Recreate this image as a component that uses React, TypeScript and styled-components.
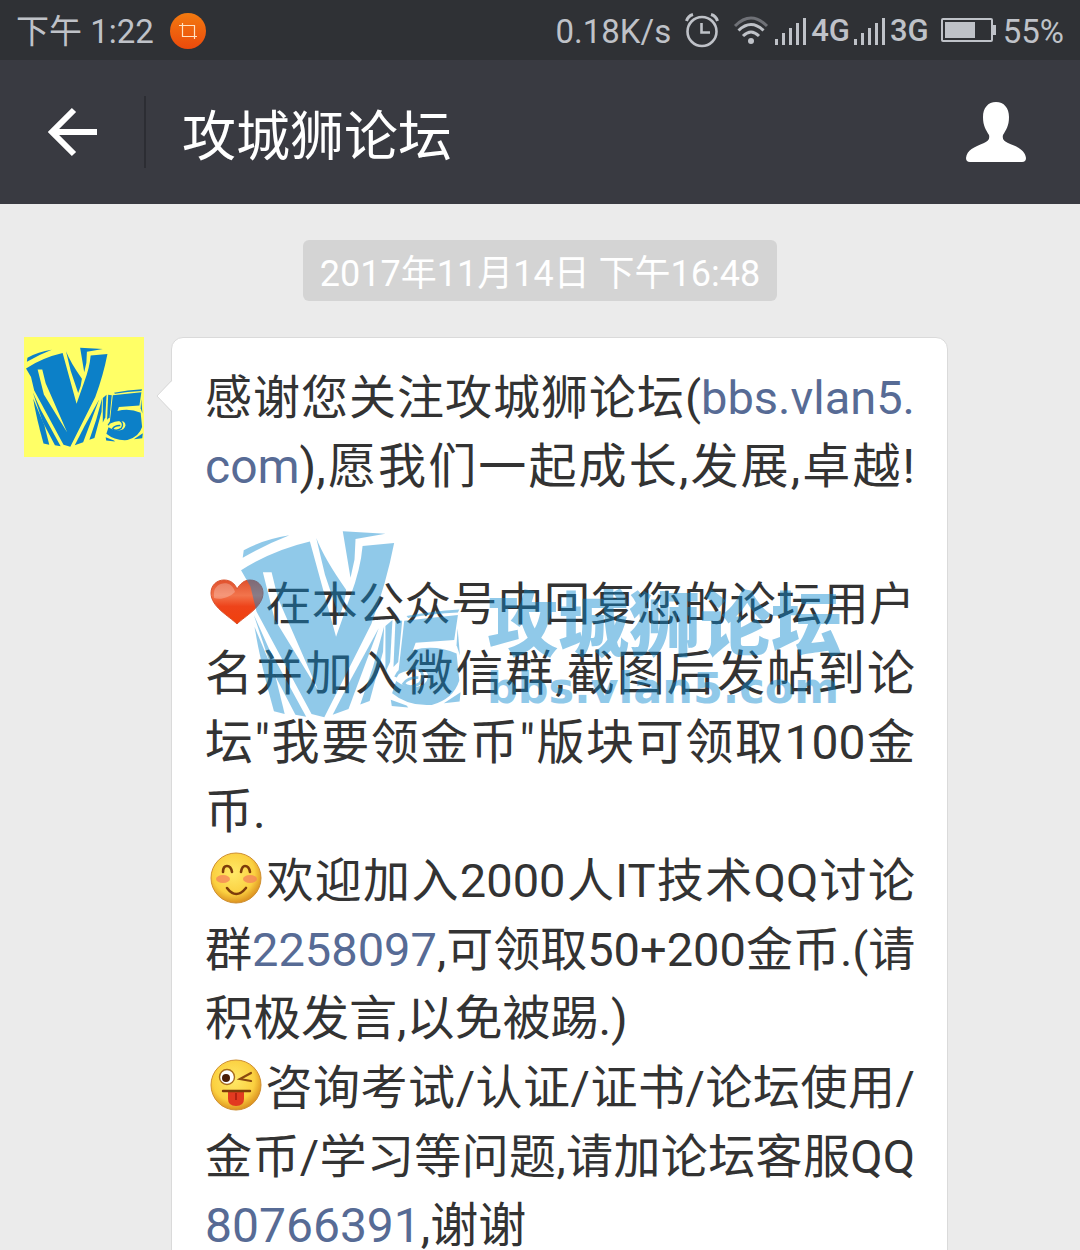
import React from 'react';
import styled, { createGlobalStyle } from 'styled-components';

const GlobalStyle = createGlobalStyle`
  *, *::before, *::after { box-sizing: border-box; }
  body {
    margin: 0;
    background: #ebebeb;
    font-family: Roboto, "Noto Sans CJK SC", sans-serif;
  }
`;

const Screen = styled.div`
  display: flex;
  flex-direction: column;
  height: 100vh;
  overflow: hidden;
`;

const StatusBar = styled.div`
  display: flex;
  flex: none;
  align-items: center;
  justify-content: space-between;
  height: 60px;
  padding: 2px 16px 0;
  background: #2f3135;
  color: #bfc2c8;
  font-size: 33px;
  line-height: 40px;
  white-space: nowrap;
`;

const StatusGroup = styled.div<{ $gap: number }>`
  display: flex;
  align-items: center;
  gap: ${(p) => p.$gap}px;
`;

const StatusText = styled.span`
  padding-top: 2px;
`;

const Network = styled.span`
  display: flex;
  align-items: center;
  gap: 4px;
  font-size: 31px;
  font-weight: 500;
`;

const Icon = styled.svg`
  display: block;
  flex: none;
`;

const Header = styled.header`
  display: flex;
  flex: none;
  align-items: center;
  height: 144px;
  padding: 0 48px 0 0;
  background: #393a41;
  color: #fff;
`;

const IconButton = styled.button<{ $width: number }>`
  display: flex;
  align-items: center;
  justify-content: center;
  width: ${(p) => p.$width}px;
  height: 72px;
  padding: 0;
  border: 0;
  background: none;
  color: inherit;
`;

const Title = styled.h1`
  flex: 1;
  margin: 0;
  padding: 12px 0 0 36px;
  border-left: 2px solid #2c2d33;
  font-size: 54px;
  font-weight: 400;
  line-height: 60px;
`;

const Chat = styled.main`
  display: flex;
  flex: 1;
  flex-direction: column;
  min-height: 0;
  padding: 36px 132px 0 24px;
`;

const Timestamp = styled.time`
  align-self: center;
  margin: 0 0 36px 108px;
  padding: 8px 17px 0;
  border-radius: 6px;
  background: #d4d4d4;
  color: #fff;
  font-size: 36px;
  line-height: 53px;
  white-space: nowrap;
`;

const Message = styled.article`
  display: flex;
  align-items: flex-start;
  gap: 27px;
`;

const Avatar = styled.div`
  display: flex;
  flex: none;
  align-items: center;
  justify-content: center;
  width: 120px;
  height: 120px;
  background: #ffff66;
  color: #0c80c8;
`;

const Bubble = styled.div`
  position: relative;
  flex: 1;
  min-width: 0;
  padding: 25px 32px 24px 33px;
  border: 1px solid #dadada;
  border-radius: 12px;
  background: #fff;
`;

const Tail = styled.svg`
  position: absolute;
  top: 41px;
  left: -16px;
`;

const Line = styled.p<{ $full?: boolean; $size?: number }>`
  min-height: 69px;
  margin: 0;
  color: #333;
  font-size: ${(p) => p.$size ?? 48}px;
  line-height: 69px;
  white-space: nowrap;
  text-align: justify;
  text-align-last: ${(p) => (p.$full ? 'justify' : 'left')};
`;

const Link = styled.a`
  color: #576b95;
  text-decoration: none;
`;

const Emoji = styled.svg`
  display: inline-block;
  width: 60px;
  height: 54px;
  vertical-align: -8px;
`;

const Watermark = styled.div`
  position: absolute;
  top: 192px;
  left: 69px;
  display: flex;
  align-items: flex-start;
  gap: 26px;
  color: #0c88cf;
  opacity: 0.45;
  pointer-events: none;
`;

const WatermarkText = styled.div`
  padding-top: 56px;
  font-weight: 900;
  font-size: 71px;
  line-height: 80px;
  white-space: nowrap;
`;

const WatermarkUrl = styled.div`
  font-family: "DejaVu Sans", sans-serif;
  font-size: 43px;
  font-weight: 700;
  line-height: 44px;
`;

function Logo({ width, height }: { width: number; height: number }) {
  return (
    <Icon width={width} height={height} viewBox="122 32 655 560" fill="currentColor" aria-hidden="true">
      <path d="M127 115L130 92Q190 60 266 48Q190 78 127 115Z" />
      <path
        fillRule="evenodd"
        d="M122 152Q215 92 327 66L405 350L448 228Q478 150 484 80L578 71Q555 190 510 312L370 590L332 580L168 275L150 200ZM187 158L213 158L232 235L352 510L222 298Z"
      />
      <path d="M346 56Q370 118 435 210Q432 250 414 290L372 165Z" />
      <path d="M425 36L552 43L463 59L460 120L448 174Z" />
      <path d="M160 285L205 385L316 588L284 582L215 450Z" />
      <path d="M162 320L225 470L252 580L220 572Q180 430 162 320Z" />
      <path d="M532 325L442 565L395 582L450 475Z" />
      <path d="M548 320L545 395L505 541L477 552L515 440Z" />
      <path d="M552 318L573 300L566 425L552 455Z" />
      <path d="M582 300L602 302L590 425L576 440Z" />
      <path d="M615 288Q690 274 772 269L768 278Q690 282 620 294Z" />
      <path d="M608 302L768 285L757 360L642 368L634 390Q700 372 764 400L772 480Q755 535 690 553Q620 558 572 518L584 482Q625 512 666 492Q690 470 670 450Q635 440 590 462Z" />
      <path d="M568 538L615 555L620 561L571 556Z" />
      <path d="M726 548L776 515L773 543Z" />
      <path d="M767 325L774 405L764 375Z" />
      <path d="M582 470Q600 432 640 440Q676 456 655 488Q626 508 606 490Q620 470 650 472" fill="none" stroke="currentColor" strokeWidth="8" />
    </Icon>
  );
}

function SignalBars() {
  return (
    <Icon width="32" height="28" viewBox="0 0 32 28" fill="currentColor" aria-hidden="true">
      <rect x="0" y="22" width="3" height="6" />
      <rect x="7" y="16" width="3" height="12" />
      <rect x="14" y="11" width="3" height="17" />
      <rect x="21" y="6" width="3" height="22" />
      <rect x="28" y="1" width="3" height="27" />
    </Icon>
  );
}

function Heart() {
  return (
    <Emoji viewBox="0 0 60 54" role="img" aria-label="爱心">
      <defs>
        <linearGradient id="heart" x1="0" y1="0" x2="0" y2="1">
          <stop offset="0" stopColor="#e0502c" />
          <stop offset="0.35" stopColor="#f2744c" />
          <stop offset="0.6" stopColor="#ee431a" />
          <stop offset="1" stopColor="#f0400c" />
        </linearGradient>
      </defs>
      <path
        d="M32 50C24 42 6 33 6 19C6 11 12 6 19 6C26 6 30 10 32 15C35 10 39 6 45 6C53 6 58 12 58 19C58 33 40 42 32 50Z"
        fill="url(#heart)"
        stroke="#d9532f"
        strokeWidth="1"
      />
      <path d="M9 19C9 9 26 4 30 18C24 24 15 26 9 24Z" fill="#fff" opacity="0.25" />
    </Emoji>
  );
}

function FaceBase({ id }: { id: string }) {
  return (
    <>
      <defs>
        <radialGradient id={id} cx="0.45" cy="0.4" r="0.6">
          <stop offset="0" stopColor="#ffe968" />
          <stop offset="0.7" stopColor="#fbd040" />
          <stop offset="1" stopColor="#dc9220" />
        </radialGradient>
      </defs>
      <circle cx="31" cy="27" r="25" fill={`url(#${id})`} stroke="#cf8f30" strokeWidth="1" />
    </>
  );
}

function Smile() {
  return (
    <Emoji viewBox="0 0 60 54" role="img" aria-label="微笑">
      <FaceBase id="smile" />
      <ellipse cx="18" cy="28" rx="7" ry="4" fill="#f4825a" opacity="0.75" />
      <ellipse cx="45" cy="28" rx="7" ry="4" fill="#f4825a" opacity="0.75" />
      <path
        d="M18 21Q18 15 22 15Q26 15 27 21M36 21Q37 15 40 15Q44 15 45 21M22 37Q31 49 41 37"
        fill="none"
        stroke="#7d3c0a"
        strokeWidth="2.6"
        strokeLinecap="round"
      />
    </Emoji>
  );
}

function Wink() {
  return (
    <Emoji viewBox="0 0 60 54" role="img" aria-label="调皮">
      <FaceBase id="wink" />
      <circle cx="22" cy="19" r="7.5" fill="#fff" stroke="#a86b1c" strokeWidth="1.4" />
      <circle cx="21" cy="20" r="4" fill="#4a1c06" />
      <path d="M46 15L35 21L46 23" fill="none" stroke="#8a4a10" strokeWidth="2.2" strokeLinecap="round" />
      <path d="M23 33V41Q23 48 31 48Q39 48 39 41V33Z" fill="#e23a20" />
      <path d="M31 35V42" stroke="#a81c10" strokeWidth="1.6" />
      <path d="M18 33H45" stroke="#7d3c0a" strokeWidth="2.4" strokeLinecap="round" />
    </Emoji>
  );
}

export default function App() {
  return (
    <Screen>
      <GlobalStyle />
      <StatusBar>
        <StatusGroup $gap={16}>
          <StatusText>下午 1:22</StatusText>
          <Icon width="36" height="36" viewBox="0 0 36 36" aria-hidden="true">
            <defs>
              <linearGradient id="crop" x1="0" y1="0" x2="0" y2="1">
                <stop offset="0" stopColor="#f27a10" />
                <stop offset="1" stopColor="#ec4a0c" />
              </linearGradient>
            </defs>
            <circle cx="18" cy="18" r="18" fill="url(#crop)" />
            <path d="M9 12.500H24.500V26M12.500 10V23.500H27" fill="none" stroke="#ffe3c4" strokeWidth="1.200" />
          </Icon>
        </StatusGroup>
        <StatusGroup $gap={14}>
          <StatusText>0.18K/s</StatusText>
          <Icon width="34" height="36" viewBox="0 0 34 36" fill="none" stroke="currentColor" aria-hidden="true">
            <circle cx="17" cy="18.500" r="14.500" strokeWidth="2.600" />
            <path d="M16.500 10V19.500H25" strokeWidth="2.600" />
            <path d="M1.500 8Q3 3 8 1.500M32.500 8Q31 3 26 1.500" strokeWidth="3" />
          </Icon>
          <StatusGroup $gap={6}>
            <Icon width="36" height="30" viewBox="0 0 36 30" fill="none" stroke="currentColor" strokeWidth="3" aria-hidden="true">
              <path d="M2 10Q18 -6 34 10" opacity="0.45" />
              <path d="M5.500 14.500Q18 2.500 30.500 14.500" />
              <path d="M10 20Q18 12 26 20" />
              <circle cx="18" cy="25" r="3" fill="currentColor" stroke="none" />
            </Icon>
            <Network>
              <SignalBars />
              4G
              <SignalBars />
              3G
            </Network>
            <Icon width="62" height="26" viewBox="0 0 62 26" aria-hidden="true">
              <rect x="7" y="1" width="50" height="22" rx="1" fill="none" stroke="currentColor" strokeWidth="2" />
              <rect x="10" y="4" width="30" height="16" fill="currentColor" />
              <rect x="58" y="7" width="3" height="10" fill="currentColor" />
            </Icon>
            <StatusText>55%</StatusText>
          </StatusGroup>
        </StatusGroup>
      </StatusBar>

      <Header>
        <IconButton $width={144} aria-label="返回">
          <Icon width="50" height="50" viewBox="0 0 50 50" fill="none" stroke="currentColor" strokeWidth="6" aria-hidden="true">
            <path d="M27 3L5 25L27 47M5 25H50" />
          </Icon>
        </IconButton>
        <Title>攻城狮论坛</Title>
        <IconButton $width={72} aria-label="公众号资料">
          <Icon width="60" height="62" viewBox="0 0 60 62" fill="currentColor" aria-hidden="true">
            <path d="M30 1C38 1 43 7 43 16C43 25 40 29 37 34C36 38 38 40 42 42C52 46 59 49 60 57Q60 61 56 61H4Q0 61 0 57C1 49 8 46 18 42C22 40 24 38 23 34C20 29 17 25 17 16C17 7 22 1 30 1Z" />
          </Icon>
        </IconButton>
      </Header>

      <Chat>
        <Timestamp dateTime="2017-11-14T16:48">2017年11月14日 下午16:48</Timestamp>
        <Message>
          <Avatar>
            <Logo width={117} height={100} />
          </Avatar>
          <Bubble>
            <Tail width="17" height="34" viewBox="0 0 17 34" aria-hidden="true">
              <path d="M17 1L1 17L17 33Z" fill="#fff" />
              <path d="M16 1L1 17L16 33" fill="none" stroke="#dadada" />
            </Tail>
            <Line $full $size={47}>
              感谢您关注攻城狮论坛(<Link href="#bbs">bbs.vlan5.</Link>
            </Line>
            <Line $full>
              <Link href="#bbs">com</Link>),愿我们一起成长,发展,卓越!
            </Line>
            <Line />
            <Line $full $size={46}>
              <Heart />在本公众号中回复您的论坛用户
            </Line>
            <Line $full>名并加入微信群,截图后发帖到论</Line>
            <Line $full>坛"我要领金币"版块可领取100金</Line>
            <Line>币.</Line>
            <Line $full $size={47}>
              <Smile />欢迎加入2000人IT技术QQ讨论
            </Line>
            <Line $full $size={47}>
              群<Link href="#qq-group">2258097</Link>,可领取50+200金币.(请
            </Line>
            <Line>积极发言,以免被踢.)</Line>
            <Line $full $size={47}>
              <Wink />咨询考试/认证/证书/论坛使用/
            </Line>
            <Line $full $size={47}>
              金币/学习等问题,请加论坛客服QQ
            </Line>
            <Line>
              <Link href="#qq-service">80766391</Link>,谢谢
            </Line>
            <Watermark>
              <Logo width={220} height={188} />
              <WatermarkText>
                攻城狮论坛
                <WatermarkUrl>bbs.vlan5.com</WatermarkUrl>
              </WatermarkText>
            </Watermark>
          </Bubble>
        </Message>
      </Chat>
    </Screen>
  );
}
